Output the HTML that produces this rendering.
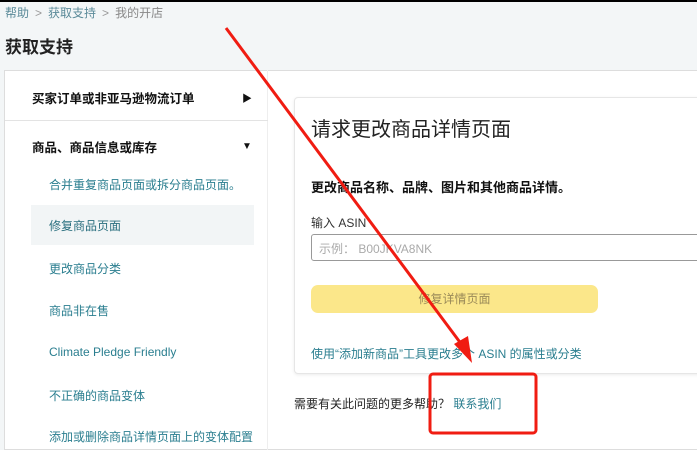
<!DOCTYPE html>
<html><head><meta charset="utf-8"><style>
*{margin:0;padding:0;box-sizing:border-box}
body{width:697px;height:438px;overflow:hidden;background:#f3f6f7;font-family:"Liberation Sans","Noto Sans CJK SC",sans-serif;position:relative;color:#111}
.top{position:absolute;left:0;top:0;width:697px;height:2px;background:#000}
.bc{position:absolute;left:5px;top:4px;font-size:12px;color:#5a8a99}
.bc span{color:#999;margin:0 6px}
h1{position:absolute;left:5px;top:33px;font-size:17px;font-weight:bold;color:#222}
.main{position:absolute;left:4px;top:70px;width:700px;height:380px;background:#fff;border:1px solid #ddd}
.side{position:absolute;left:4px;top:70px;width:264px;height:380px;border-right:1px solid #eee}
.cat{position:absolute;left:32px;font-size:12.5px;font-weight:bold;color:#111}
.arr{position:absolute;left:242px;font-size:10px}
.div{position:absolute;left:5px;top:120px;width:263px;height:1px;background:#e3e3e3}
.it{position:absolute;left:49px;font-size:12px;color:#2a7e8f}
.sel{position:absolute;left:31px;top:205px;width:223px;height:40px;background:#f2f5f6}
.card{position:absolute;left:294px;top:97px;width:420px;height:277px;background:#fff;border:1px solid #e6e6e6;border-radius:4px;box-shadow:0 1px 3px rgba(0,0,0,.08)}
.t1{position:absolute;left:311px;top:113px;font-size:20px;color:#222}
.t2{position:absolute;left:311px;top:177px;font-size:13px;font-weight:bold}
.lab{position:absolute;left:311px;top:214px;font-size:12px;color:#333}
.inp{position:absolute;left:311px;top:234px;width:400px;height:27px;border:1px solid #999;border-radius:3px;font-size:12px;color:#aaa;padding:5px 7px}
.btn{position:absolute;left:311px;top:285px;width:287px;height:28px;background:#fbe78a;border-radius:7px;font-size:12px;color:#9a8a58;text-align:center;line-height:28px}
.lnk{position:absolute;left:311px;top:345px;font-size:12px;color:#2a7e8f}
.help{position:absolute;left:294px;top:395px;font-size:12px;color:#222}
.help a{color:#2a7e8f;text-decoration:none}
</style></head><body>
<div class="top"></div>
<div class="bc">帮助<span>&gt;</span>获取支持<span>&gt;</span><b style="font-weight:normal;color:#888">我的开店</b></div>
<h1>获取支持</h1>
<div class="main"></div>
<div class="side"></div>
<div class="cat" style="top:88px">买家订单或非亚马逊物流订单</div><div class="arr" style="top:90px">▶</div>
<div class="div"></div>
<div class="cat" style="top:137px">商品、商品信息或库存</div><div class="arr" style="top:141px">▼</div>
<div class="it" style="top:176px">合并重复商品页面或拆分商品页面。</div>
<div class="sel"></div>
<div class="it" style="top:217px;color:#2a6f7f">修复商品页面</div>
<div class="it" style="top:260px">更改商品分类</div>
<div class="it" style="top:302px">商品非在售</div>
<div class="it" style="top:345px">Climate Pledge Friendly</div>
<div class="it" style="top:387px">不正确的商品变体</div>
<div class="it" style="top:428px">添加或删除商品详情页面上的变体配置</div>
<div class="card"></div>
<div class="t1">请求更改商品详情页面</div>
<div class="t2">更改商品名称、品牌、图片和其他商品详情。</div>
<div class="lab">输入 ASIN</div>
<div class="inp">示例： B00JKVA8NK</div>
<div class="btn">修复详情页面</div>
<div class="lnk">使用“添加新商品”工具更改多个 ASIN 的属性或分类</div>
<div class="help">需要有关此问题的更多帮助？ <a>联系我们</a></div>
<svg style="position:absolute;left:0;top:0" width="697" height="438">
<line x1="226" y1="28" x2="462" y2="345" stroke="#f01c12" stroke-width="3"/>
<polygon points="472,363 454,344 468,336" fill="#f01c12"/>
<rect x="430" y="374" width="106" height="59" rx="3" fill="none" stroke="#f01c12" stroke-width="3"/>
</svg>
</body></html>
